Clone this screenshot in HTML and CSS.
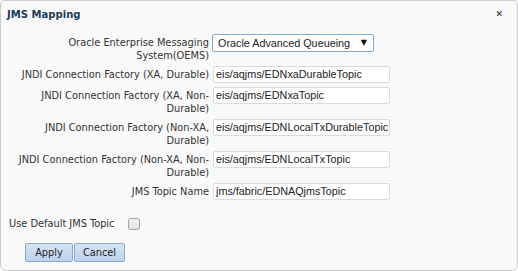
FILE: index.html
```html
<!DOCTYPE html>
<html>
<head>
<meta charset="utf-8">
<link rel="stylesheet" href="styles.css">
</head>
<body>
<div class="dialog">
  <div class="titlebar">
    <span class="title">JMS Mapping</span>
    <span class="close">✕</span>
  </div>
  <div class="form">
    <div class="row two">
      <div class="label">Oracle Enterprise Messaging<br>System(OEMS)</div>
      <div class="select"><span>Oracle Advanced Queueing</span><span class="arrow">▼</span></div>
    </div>
    <div class="row">
      <div class="label">JNDI Connection Factory (XA, Durable)</div>
      <div class="input">eis/aqjms/EDNxaDurableTopic</div>
    </div>
    <div class="row two">
      <div class="label">JNDI Connection Factory (XA, Non-<br>Durable)</div>
      <div class="input">eis/aqjms/EDNxaTopic</div>
    </div>
    <div class="row two">
      <div class="label">JNDI Connection Factory (Non-XA,<br>Durable)</div>
      <div class="input">eis/aqjms/EDNLocalTxDurableTopic</div>
    </div>
    <div class="row two">
      <div class="label">JNDI Connection Factory (Non-XA, Non-<br>Durable)</div>
      <div class="input">eis/aqjms/EDNLocalTxTopic</div>
    </div>
    <div class="row">
      <div class="label">JMS Topic Name</div>
      <div class="input">jms/fabric/EDNAQjmsTopic</div>
    </div>
  </div>
  <div class="check-row">
    <span class="check-label">Use Default JMS Topic</span>
    <span class="checkbox"></span>
  </div>
  <div class="buttons">
    <button class="btn apply">Apply</button>
    <button class="btn cancel">Cancel</button>
  </div>
</div>
</body>
</html>
```
FILE: styles.css
```css
html, body {
  margin: 0;
  padding: 0;
  background: #ffffff;
}
body {
  font-family: "DejaVu Sans Condensed", "DejaVu Sans", sans-serif;
  font-stretch: condensed;
  font-size: 10.9px;
  color: #333333;
}
.dialog {
  width: 516px;
  height: 269px;
  background: #f9f9f9;
  border: 1px solid #c9cdd1;
  border-radius: 4px 4px 6px 6px;
  box-sizing: content-box;
}
.titlebar {
  display: flex;
  justify-content: space-between;
  align-items: center;
  height: 26px;
  padding: 0 14px 0 6px;
}
.title {
  font-weight: bold;
  font-size: 11.2px;
  color: #1d3c5a;
}
.close {
  font-family: "DejaVu Sans", sans-serif;
  font-stretch: normal;
  font-size: 9px;
  color: #222;
}
.form {
  display: flex;
  flex-direction: column;
  gap: 4px;
  padding: 7px 0 0 11px;
}
.row {
  display: flex;
  align-items: flex-start;
  gap: 4px;
}
.label {
  width: 197px;
  text-align: right;
  line-height: 13px;
  padding-top: 2px;
  white-space: nowrap;
}
.input {
  width: 173px;
  height: 15px;
  line-height: 15px;
  border: 1px solid #dadada;
  background: #ffffff;
  border-radius: 2px;
  padding: 0 0 0 2px;
  font-family: "Liberation Sans", Arial, sans-serif;
  font-stretch: normal;
  font-size: 10.8px;
  color: #222;
  overflow: hidden;
  white-space: nowrap;
}
.select {
  width: 149px;
  height: 16px;
  line-height: 16px;
  border: 1px solid #86a9d1;
  border-radius: 2px;
  background: #ffffff;
  padding: 0 6px 0 5px;
  display: flex;
  justify-content: space-between;
  font-family: "Liberation Sans", Arial, sans-serif;
  font-stretch: normal;
  font-size: 10.8px;
  color: #222;
  margin-left: -1px;
}
.arrow {
  font-family: "DejaVu Sans", sans-serif;
  font-stretch: normal;
  font-size: 8px;
  color: #111;
}
.check-row {
  display: flex;
  align-items: center;
  gap: 14px;
  padding: 17px 0 0 8px;
}
.checkbox {
  width: 10px;
  height: 10px;
  border: 1px solid #a3a3a3;
  border-radius: 3px;
  background: linear-gradient(#f4f4f4, #e2e2e2);
}
.buttons {
  display: flex;
  gap: 1px;
  padding: 13px 0 0 24px;
}
.btn {
  font-family: "DejaVu Sans Condensed", "DejaVu Sans", sans-serif;
  font-stretch: condensed;
  font-size: 10.9px;
  color: #222;
  height: 19px;
  padding: 0;
  border: 1px solid #89a9cb;
  border-radius: 2px;
  background: linear-gradient(#d4e4f5, #bcd3ec);
}
.apply { width: 48px; }
.cancel { width: 51px; }
```
